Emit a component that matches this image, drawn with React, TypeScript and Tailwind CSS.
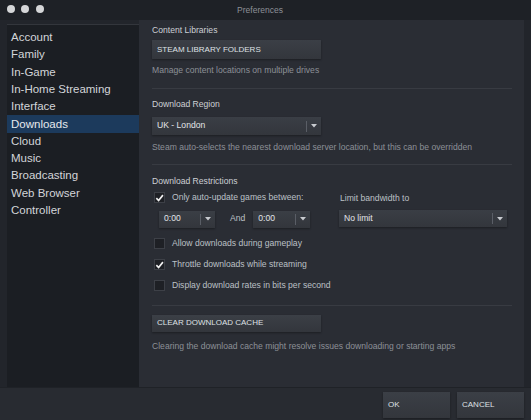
import React from 'react'

const font = { fontFamily: '"Liberation Sans", Arial, sans-serif' }

const navItems = [
  'Account',
  'Family',
  'In-Game',
  'In-Home Streaming',
  'Interface',
  'Downloads',
  'Cloud',
  'Music',
  'Broadcasting',
  'Web Browser',
  'Controller'
]

function Check({ checked, label }: { checked?: boolean; label: string }) {
  return (
    <div className="flex items-center gap-[7px] h-[21px]">
      <div className="w-[11px] h-[11px] bg-[#1e2025] border border-[#3d4047] flex items-center justify-center">
        {checked && (
          <svg width="10" height="10" viewBox="0 0 10 10">
            <path d="M1.5 5.2 L4 7.8 L8.8 1.8" fill="none" stroke="#f2f2f2" strokeWidth="1.8" />
          </svg>
        )}
      </div>
      <span className="text-[8.6px] text-[#bcc0c6]">{label}</span>
    </div>
  )
}

function Select({ value, className }: { value: string; className: string }) {
  return (
    <div className={`flex items-center bg-gradient-to-b from-[#3a3e45] to-[#33363c] shadow-[0_1px_2px_rgba(0,0,0,0.35)] ${className}`}>
      <span className="flex-1 pl-[5px] text-[8.6px] text-[#e2e4e8]">{value}</span>
      <div className="w-px h-[11px] bg-[#5a5e66]" />
      <div className="w-[14px] flex justify-center">
        <svg width="6" height="4" viewBox="0 0 6 4">
          <path d="M0 0 L6 0 L3 3.5 Z" fill="#c8cbd0" />
        </svg>
      </div>
    </div>
  )
}

function Btn({ label, className }: { label: string; className: string }) {
  return (
    <div className={`flex items-center pl-[5px] bg-gradient-to-b from-[#3b3f46] to-[#33363c] shadow-[0_1px_2px_rgba(0,0,0,0.35)] text-[8px] text-[#dfe1e5] ${className}`}>
      {label}
    </div>
  )
}

export default function App() {
  return (
    <div style={font} className="w-[531px] h-[420px] flex flex-col bg-[#24272d] overflow-hidden">
      {/* Title bar */}
      <div className="h-[20px] flex items-center bg-[#1e2126] relative">
        <div className="flex gap-[6.5px] pl-[6.5px] -mt-[3px]">
          <div className="w-[8px] h-[8px] rounded-full bg-[#d5d6d8]" />
          <div className="w-[8px] h-[8px] rounded-full bg-[#d5d6d8]" />
          <div className="w-[8px] h-[8px] rounded-full bg-[#d5d6d8]" />
        </div>
        <div className="absolute inset-0 flex items-center justify-center text-[8.5px] text-[#8d9097] pr-[11px]">
          Preferences
        </div>
      </div>

      <div className="flex flex-1 bg-[#22252b]">
        {/* Sidebar */}
        <div className="ml-[7px] mt-[4px] w-[132px] bg-[#1b1e23] border-t border-[#33363c] pt-[4px]">
          {navItems.map((item) => (
            <div
              key={item}
              className={`h-[17.3px] flex items-center pl-[4px] text-[11.5px] ${
                item === 'Downloads' ? 'bg-[#1c3a5c] text-[#e6e8ec]' : 'text-[#d3d5d9]'
              }`}
            >
              {item}
            </div>
          ))}
        </div>

        {/* Main panel */}
        <div className="flex-1 mr-[7px] bg-[#2a2d34] pl-[13px] pr-[12px] pt-[2px] text-[8.6px] leading-[13.5px]">
          <div className="text-[#cdd0d5] h-[17px] flex items-center">Content Libraries</div>
          <Btn label="STEAM LIBRARY FOLDERS" className="w-[169px] h-[19px] mt-[1px]" />
          <div className="text-[#8c9097] mt-[5px]">Manage content locations on multiple drives</div>
          <div className="h-px bg-[#383b42] mt-[10px]" />

          <div className="text-[#cdd0d5] mt-[9px]">Download Region</div>
          <Select value="UK - London" className="w-[169px] h-[18px] mt-[6px]" />
          <div className="text-[#8c9097] mt-[6px]">
            Steam auto-selects the nearest download server location, but this can be overridden
          </div>
          <div className="h-px bg-[#383b42] mt-[9px]" />

          <div className="text-[#cdd0d5] mt-[10px]">Download Restrictions</div>
          <div className="flex -mt-[1px]">
            <div className="w-[187px] pl-[2px]">
              <Check checked label="Only auto-update games between:" />
              <div className="flex items-center mt-[2.5px] pl-[5px]">
                <Select value="0:00" className="w-[56px] h-[17px]" />
                <span className="text-[#bcc0c6] ml-[15px] mr-[8px]">And</span>
                <Select value="0:00" className="w-[57px] h-[17px]" />
              </div>
            </div>
            <div className="flex-1">
              <div className="text-[#bcc0c6] mt-[4.75px] ml-[1px]">Limit bandwidth to</div>
              <Select value="No limit" className="w-[168px] h-[17px] mt-[5px]" />
            </div>
          </div>
          <div className="pl-[2px] mt-[5.5px]">
            <Check label="Allow downloads during gameplay" />
            <Check checked label="Throttle downloads while streaming" />
            <Check label="Display download rates in bits per second" />
          </div>
          <div className="h-px bg-[#383b42] mt-[8.5px]" />

          <Btn label="CLEAR DOWNLOAD CACHE" className="w-[169px] h-[17px] mt-[9px]" />
          <div className="text-[#8c9097] mt-[8px]">
            Clearing the download cache might resolve issues downloading or starting apps
          </div>
        </div>
      </div>

      {/* Bottom bar */}
      <div className="h-[33px] bg-[#282b31] flex items-end justify-end gap-[7px] pr-[7px] pb-[2px] border-t border-[#1f2227]">
        <Btn label="OK" className="w-[67px] h-[26px] text-[8.5px]" />
        <Btn label="CANCEL" className="w-[67px] h-[26px] text-[8.5px]" />
      </div>
    </div>
  )
}
